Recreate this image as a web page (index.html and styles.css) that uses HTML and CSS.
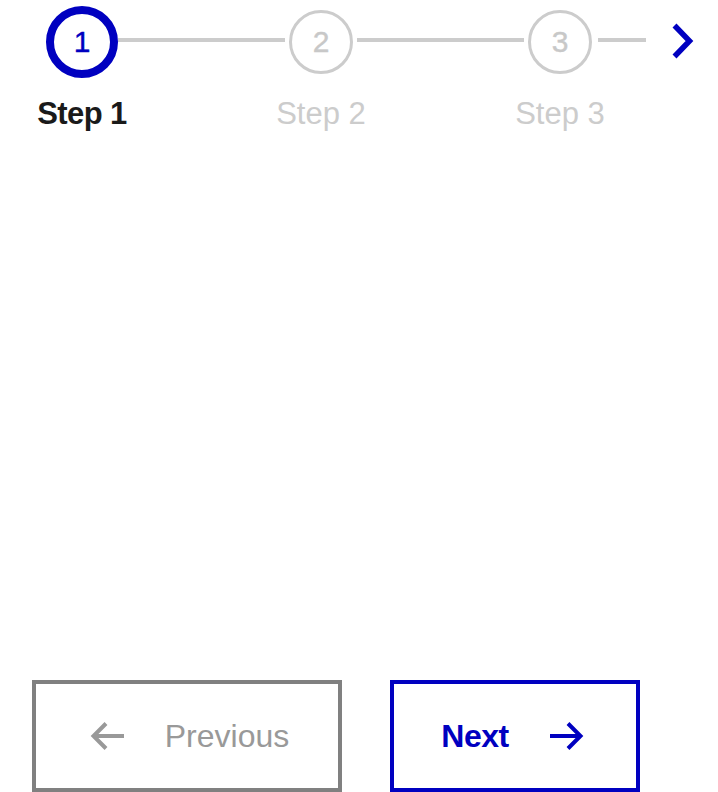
FILE: index.html
```html
<!DOCTYPE html>
<html lang="en">
<head>
<meta charset="utf-8">
<title>Stepper</title>
<link rel="stylesheet" href="styles.css">
</head>
<body>
<div class="page">
  <nav class="stepper">
    <div class="step step-active">
      <div class="circle circle-active">1</div>
      <div class="label label-active">Step 1</div>
    </div>
    <div class="line"></div>
    <div class="step">
      <div class="circle">2</div>
      <div class="label">Step 2</div>
    </div>
    <div class="line"></div>
    <div class="step">
      <div class="circle">3</div>
      <div class="label">Step 3</div>
    </div>
    <div class="line line-tail"></div>
    <button class="chevron" aria-label="More steps">
      <svg width="24" height="36" viewBox="0 0 24 36"><path d="M3.5 2.5L18.5 18L3.5 33.5" fill="none" stroke="#0000c0" stroke-width="5.5"/></svg>
    </button>
  </nav>
  <div class="actions">
    <button class="btn btn-prev">
      <svg class="arrow" width="36" height="28" viewBox="0 0 36 28"><path d="M35 14H4M17 1.5L4.5 14L17 26.5" fill="none" stroke="#999999" stroke-width="4"/></svg>
      <span>Previous</span>
    </button>
    <button class="btn btn-next">
      <span>Next</span>
      <svg class="arrow" width="36" height="28" viewBox="0 0 36 28"><path d="M1 14H32M19 1.5L31.5 14L19 26.5" fill="none" stroke="#0000c0" stroke-width="4"/></svg>
    </button>
  </div>
</div>
</body>
</html>
```
FILE: styles.css
```css
html, body {
  margin: 0;
  padding: 0;
  background: #ffffff;
}

body {
  font-family: "Liberation Sans", Arial, sans-serif;
}

.page {
  height: 792px;
  display: flex;
  flex-direction: column;
  overflow: hidden;
}

.stepper {
  display: flex;
  align-items: flex-start;
  padding: 6px 0 0 46px;
}

.step {
  width: 72px;
  display: flex;
  flex-direction: column;
  align-items: center;
}

.circle {
  box-sizing: border-box;
  width: 64px;
  height: 64px;
  margin: 4px 0;
  border: 3px solid #cccccc;
  border-radius: 50%;
  display: flex;
  align-items: center;
  justify-content: center;
  font-size: 30px;
  color: #c8c8c8;
  line-height: 1;
  -webkit-text-stroke: 0.4px currentColor;
}

.circle-active {
  width: 72px;
  height: 72px;
  margin: 0;
  border: 8px solid #0000c0;
  color: #0000c0;
}

.label {
  margin-top: 20px;
  font-size: 31px;
  line-height: 31px;
  white-space: nowrap;
  color: #cccccc;
}

.label-active {
  color: #1a1a1a;
  font-weight: 700;
  letter-spacing: -0.6px;
}

.line {
  width: 167px;
  height: 4px;
  margin-top: 32px;
  background: #cccccc;
}

.line-tail {
  width: 48px;
  margin-left: 2px;
}

.chevron {
  margin: 17px 0 0 25px;
  padding: 0;
  border: 0;
  background: none;
  display: flex;
}

.actions {
  margin-top: auto;
  display: flex;
  gap: 48px;
  padding-left: 32px;
}

.btn {
  box-sizing: border-box;
  height: 112px;
  background: #ffffff;
  display: flex;
  align-items: center;
  justify-content: center;
  gap: 40px;
  font-family: "Liberation Sans", Arial, sans-serif;
  font-size: 32px;
  padding: 0;
}

.btn-prev {
  width: 310px;
  border: 4px solid #808080;
  color: #999999;
  padding-left: 4px;
}

.btn-next {
  width: 250px;
  border: 4px solid #0000c0;
  color: #0000c0;
  font-weight: 700;
  letter-spacing: -0.5px;
  gap: 40px;
  padding-right: 4px;
}

.arrow {
  display: block;
}
```
